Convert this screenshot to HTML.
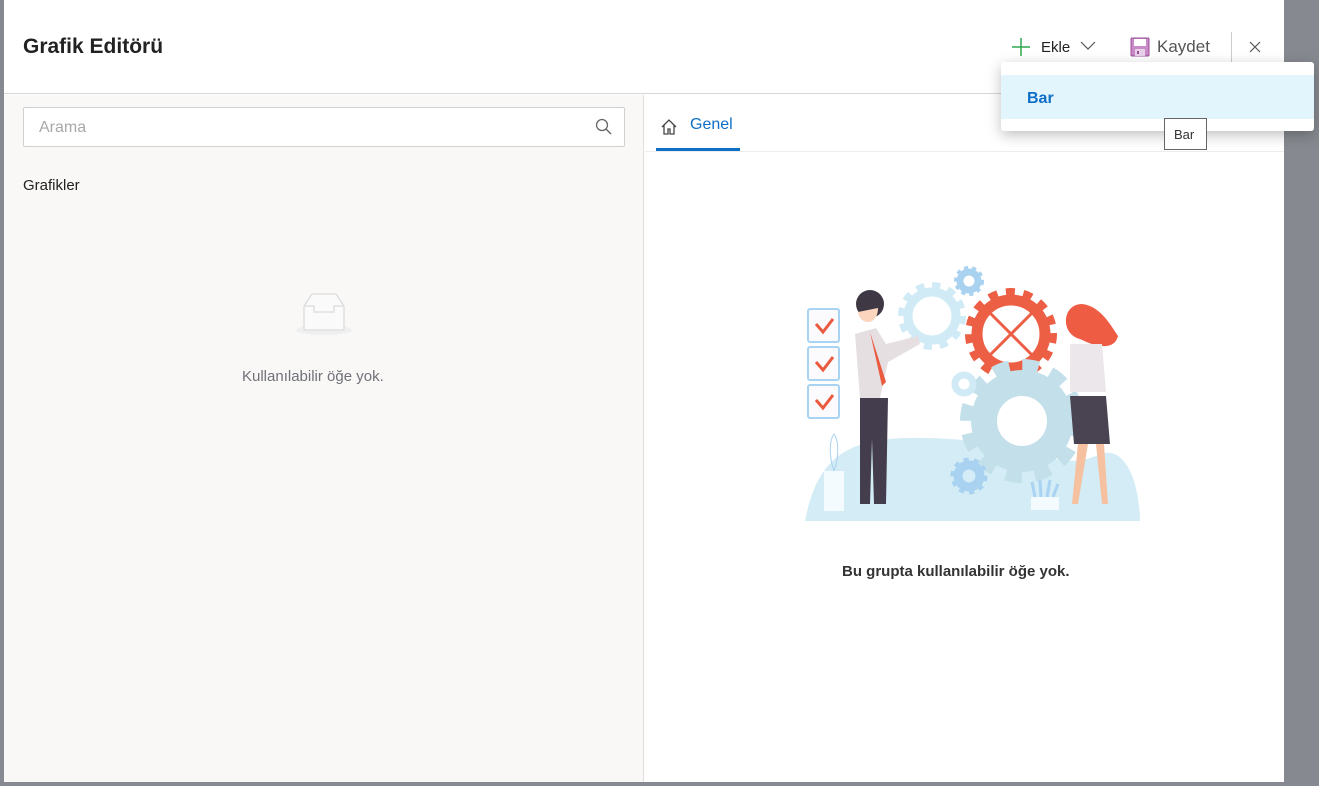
<!DOCTYPE html>
<html><head><meta charset="utf-8"><style>
*{margin:0;padding:0;box-sizing:border-box}
body{width:1319px;height:786px;overflow:hidden;background:#868a90;font-family:"Liberation Sans",sans-serif;position:relative}
.dlg{position:absolute;left:4px;top:0;width:1280px;height:782px;background:#fff}
.hdr{position:absolute;left:0;top:0;width:1280px;height:94px;border-bottom:1px solid #d6d6d6}
.title{position:absolute;left:19px;top:35px;font-size:21px;font-weight:bold;color:#222}
.left{position:absolute;left:0;top:95px;width:640px;height:687px;background:#f9f8f7;border-right:1px solid #e1dfdd}
.search{position:absolute;left:19px;top:12px;width:602px;height:40px;background:#fff;border:1px solid #d0d0d0;border-radius:2px}
.search span{position:absolute;left:15px;top:11px;font-size:16px;color:#a8a8a8}
.t{position:absolute;white-space:nowrap}
</style></head><body>
<div class="dlg">
 <div class="hdr">
  <div class="title">Grafik Editörü</div>
  <svg style="position:absolute;left:1007px;top:37px" width="20" height="20"><path d="M10 1V19M1 10H19" stroke="#2ea84f" stroke-width="1.5"/></svg>
  <div class="t" style="left:1037px;top:39px;font-size:15px;color:#222">Ekle</div>
  <svg style="position:absolute;left:1076px;top:41px" width="16" height="10"><path d="M1 1L8 8L15 1" stroke="#555" fill="none" stroke-width="1.2"/></svg>
  <svg style="position:absolute;left:1126px;top:37px" width="20" height="20"><rect x="1" y="1" width="18" height="18" rx="1" fill="#c98ac7" stroke="#9b4f9a"/><rect x="4" y="2" width="12" height="7" fill="#fff"/><rect x="5" y="12" width="10" height="7" fill="#e8d0e7"/><rect x="7" y="14" width="2" height="3" fill="#9b4f9a"/></svg>
  <div class="t" style="left:1153px;top:37px;font-size:17px;color:#555">Kaydet</div>
  <div style="position:absolute;left:1227px;top:32px;width:1px;height:32px;background:#ccc"></div>
  <svg style="position:absolute;left:1245px;top:41px" width="12" height="12"><path d="M1 1L11 11M11 1L1 11" stroke="#555" stroke-width="1.2"/></svg>
 </div>
 <div class="left">
  <div class="search"><span>Arama</span>
   <svg style="position:absolute;left:571px;top:10px" width="18" height="18"><circle cx="7" cy="7" r="5.5" stroke="#666" fill="none" stroke-width="1.3"/><path d="M11 11L16 16" stroke="#666" stroke-width="1.4"/></svg></div>
  <div class="t" style="left:19px;top:82px;font-size:15px;color:#222">Grafikler</div>
  <svg style="position:absolute;left:284px;top:195px" width="70" height="50"><ellipse cx="36" cy="40" rx="28" ry="5" fill="#efefef"/><path d="M16 16L24 4H48L56 16V40H16Z" fill="#fafafa" stroke="#dcdcdc" stroke-width="1.3"/><path d="M16 16H26V22H46V16H56" fill="none" stroke="#dcdcdc" stroke-width="1.3"/></svg>
  <div class="t" style="left:238px;top:273px;font-size:15px;color:#707078">Kullanılabilir öğe yok.</div>
 </div>
 <svg style="position:absolute;left:656px;top:118px" width="18" height="18"><path d="M2 9L9 2L16 9M4 7V16H8V11H10V16H14V7" fill="none" stroke="#444" stroke-width="1.3"/></svg>
 <div class="t" style="left:686px;top:116px;font-size:16px;color:#0e6fc7">Genel</div>
 <div style="position:absolute;left:652px;top:148px;width:84px;height:3px;background:#0e6fc7"></div>
 <div style="position:absolute;left:641px;top:151px;width:639px;height:1px;background:#ededed"></div>
 <svg style="position:absolute;left:796px;top:264px" width="346" height="260">
  <path d="M5 257C20 180 60 170 150 175C230 180 260 210 300 190C330 180 340 230 340 257Z" fill="#d3ecf6"/>
  <g fill="#fbfbfd" stroke="#a9d3f2" stroke-width="2"><rect x="8" y="45" width="31" height="33" rx="2"/><rect x="8" y="83" width="31" height="33" rx="2"/><rect x="8" y="121" width="31" height="33" rx="2"/></g>
  <g fill="none" stroke="#ea5a3e" stroke-width="3"><path d="M16 60L23 68L33 55M16 98L23 106L33 93M16 136L23 144L33 131"/></g>
  <circle cx="132" cy="52" r="24" fill="none" stroke="#d0ebf6" stroke-width="9"/><circle cx="132" cy="52" r="30" fill="none" stroke="#d0ebf6" stroke-width="8" stroke-dasharray="8 7.7"/>
  <circle cx="169" cy="17" r="9" fill="none" stroke="#a8d2f0" stroke-width="7"/><circle cx="169" cy="17" r="13" fill="none" stroke="#a8d2f0" stroke-width="4" stroke-dasharray="4 4"/>
  <circle cx="211" cy="70" r="34" fill="none" stroke="#ec5f45" stroke-width="11"/><circle cx="211" cy="70" r="42" fill="none" stroke="#ec5f45" stroke-width="8" stroke-dasharray="9 8.5"/>
  <path d="M188 47L234 93M234 47L188 93" stroke="#ec5f45" stroke-width="3"/>
  <circle cx="222" cy="157" r="38" fill="none" stroke="#c3e0ea" stroke-width="26"/><circle cx="222" cy="157" r="55" fill="none" stroke="#c3e0ea" stroke-width="14" stroke-dasharray="16 12.8"/>
  <circle cx="164" cy="120" r="9" fill="none" stroke="#d0ebf6" stroke-width="7"/>
  <circle cx="169" cy="212" r="11" fill="none" stroke="#a8d2f0" stroke-width="9"/><circle cx="169" cy="212" r="16" fill="none" stroke="#a8d2f0" stroke-width="5" stroke-dasharray="5 5"/>
  <rect x="24" y="207" width="20" height="40" fill="#f4fbfe"/><path d="M34 207C28 190 30 175 34 170C38 175 40 190 34 207" fill="none" stroke="#a9d3f2"/>
  <rect x="231" y="233" width="28" height="13" fill="#f4fbfe"/><path d="M235 233L232 218M241 233L240 216M247 233L250 216M253 233L258 220" stroke="#a9d3f2" stroke-width="3"/>
  <circle cx="70" cy="40" r="14" fill="#3d3844"/><path d="M58 48C60 62 78 62 78 44" fill="#fbd5bd"/>
  <path d="M55 70L76 64L86 80L118 72L120 80L88 98L80 134H60Z" fill="#e5dfe2"/><path d="M70 68L86 118L82 122Z" fill="#ea5a3e"/>
  <path d="M60 134H88L86 240H74L72 175L70 240H60Z" fill="#433d4d"/>
  <path d="M282 40C262 40 260 70 280 75C300 85 315 85 318 72C310 60 300 42 282 40Z" fill="#ef5c44"/>
  <path d="M270 80H302L306 128H270Z" fill="#ece7ea"/><path d="M270 132H306L310 180H274Z" fill="#4a4452"/>
  <path d="M278 180L272 240H278L288 180ZM296 180L302 240H308L304 180Z" fill="#f5c1a0"/>
 </svg>
 <div class="t" style="left:838px;top:563px;font-size:15px;font-weight:bold;color:#333">Bu grupta kullanılabilir öğe yok.</div>
</div>
<div style="position:absolute;left:1001px;top:62px;width:313px;height:69px;background:#fff;border-radius:3px;box-shadow:0 4px 14px rgba(0,0,0,.25)">
 <div style="position:absolute;left:0;top:13px;width:313px;height:44px;background:#e2f4fc"></div>
 <div class="t" style="left:26px;top:28px;font-size:16px;font-weight:bold;color:#0e6fc7">Bar</div>
</div>
<div style="position:absolute;left:1164px;top:118px;width:43px;height:32px;background:#fff;border:1px solid #666"><div class="t" style="left:9px;top:8px;font-size:13px;color:#333">Bar</div></div>
</body></html>
